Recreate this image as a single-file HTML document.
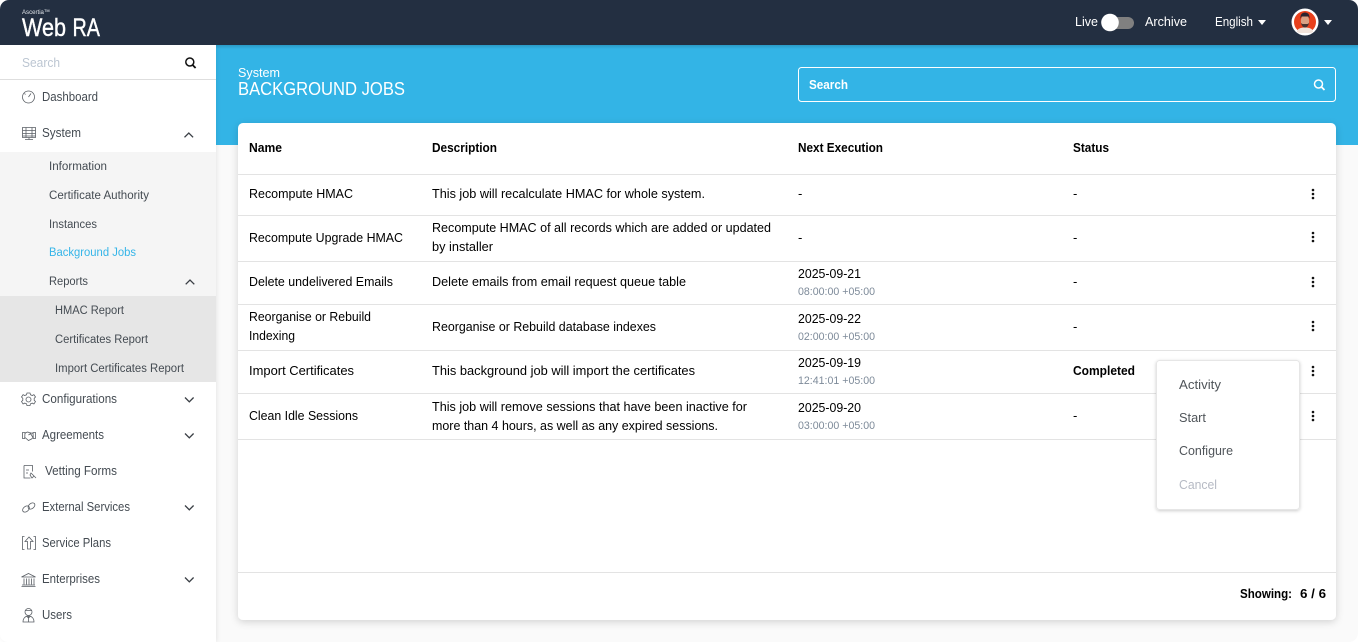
<!DOCTYPE html>
<html><head><meta charset="utf-8"><title>Background Jobs</title>
<style>
html,body{margin:0;padding:0;width:1358px;height:642px;overflow:hidden;background:#fff}
svg{display:block}
text{font-family:"Liberation Sans",sans-serif;font-size:13px;fill:#000;white-space:pre}
.s text{font-size:12.5px;fill:#444b52}
.m text{fill:#50555a;font-size:13px}
.b{font-weight:bold;font-size:12.500px}
.t{font-size:11px;fill:#7d8a99}
.i *{fill:none;stroke:#5a5f65;stroke-width:.8}
.c{fill:none;stroke:#3a3f45;stroke-width:1.3}
</style></head><body>
<svg width="1358" height="642" viewBox="0 0 1358 642" xmlns="http://www.w3.org/2000/svg">
<defs>
<linearGradient id="hs" x1="0" y1="0" x2="0" y2="1"><stop offset="0" stop-color="#2a9ac6"/><stop offset="1" stop-color="#33b4e6"/></linearGradient>
<filter id="sh" x="-3%" y="-3%" width="106%" height="108%"><feDropShadow dx="0" dy="2" stdDeviation="4" flood-color="#000" flood-opacity=".16"/></filter>
<filter id="sh2" x="-10%" y="-10%" width="120%" height="120%"><feDropShadow dx="0" dy="1" stdDeviation="1.500" flood-color="#000" flood-opacity=".2"/></filter>
<filter id="sh3" x="-5%" y="0" width="110%" height="100%"><feDropShadow dx="1" dy="0" stdDeviation="2" flood-color="#000" flood-opacity=".08"/></filter>
</defs>
<rect width="1358" height="642" fill="#fff"/>
<rect x="0" y="0" width="1358" height="642" rx="9" fill="#fafafa"/>
<rect x="216" y="45" width="1142" height="100" fill="#33b4e6"/>
<rect x="216" y="45" width="1142" height="4" fill="url(#hs)"/>

<!-- sidebar -->
<path d="M0 45H216V642H8a8 8 0 0 1-8-8Z" fill="#fff" filter="url(#sh3)"/>
<rect x="0" y="152" width="216" height="144" fill="#f5f5f5"/>
<rect x="0" y="296" width="216" height="86" fill="#e6e6e6"/>
<rect x="0" y="79" width="216" height="1" fill="#dedede"/>

<!-- header -->
<path d="M9 0H1349a9 9 0 0 1 9 9V45H0V9a9 9 0 0 1 9-9Z" fill="#232f41"/>
<text x="22" y="14" style="font-size:6.500px;fill:#dfe3e8" textLength="28" lengthAdjust="spacingAndGlyphs">Ascertia™</text>
<text x="22" y="36" style="font-size:25px;fill:#fff;stroke:#fff;stroke-width:.4" textLength="44" lengthAdjust="spacingAndGlyphs">Web</text>
<text x="72.500" y="36" style="font-size:25px;fill:#fff;stroke:#fff;stroke-width:.4" textLength="27.500" lengthAdjust="spacingAndGlyphs">RA</text>
<text x="1075" y="26" style="fill:#fff" textLength="23" lengthAdjust="spacingAndGlyphs">Live</text>
<rect x="1110" y="17" width="24" height="12" rx="6" fill="#808080"/>
<circle cx="1110" cy="22.500" r="8.800" fill="#fff"/>
<text x="1145" y="26" style="fill:#fff" textLength="42" lengthAdjust="spacingAndGlyphs">Archive</text>
<text x="1215" y="26" style="fill:#fff" textLength="38" lengthAdjust="spacingAndGlyphs">English</text>
<path d="M1258 20h8l-4 5Z" fill="#fff"/>
<circle cx="1305" cy="22" r="13.500" fill="#fff"/>
<circle cx="1305" cy="22" r="11" fill="#e8401c"/>
<path d="M1297 32c0-3.500 4-4.500 8-4.500s8 1 8 4.500c-2 1.500-5 1-8 1s-6 .5-8-1Z" fill="#f1e3da"/>
<ellipse cx="1305" cy="21" rx="4.200" ry="6" fill="#d9a184"/>
<path d="M1300.500 19c-.5-5 2-6.500 4.500-6.500s5 1.500 4.500 6.500l-1-2.500h-7Z" fill="#2c2430"/>
<path d="M1301 23c1 4 2.500 4.500 4 4.500s3-.5 4-4.500l-1.500 1h-5Z" fill="#4a3330"/>
<path d="M1324 20h8l-4 5Z" fill="#fff"/>

<!-- sidebar search -->
<text x="22" y="67" style="font-size:13px;fill:#bcc6d2" textLength="38" lengthAdjust="spacingAndGlyphs">Search</text>
<circle cx="189.800" cy="62" r="4" fill="none" stroke="#111" stroke-width="1.500"/>
<path d="M192.600 65l3 3" stroke="#111" stroke-width="1.800" fill="none"/>

<!-- sidebar icons -->
<g class="i">
<circle cx="28.500" cy="97" r="6"/><path d="M28.500 97l2.500-3.500M24.500 93.500l1 1"/>
<path d="M22.500 127.500h13v10h-13ZM22.500 130.500h13M22.500 133.500h13M22.500 136h13M26 127.500v10M32 127.500v10M25 139.500h8M29 137.500v2"/>
<circle cx="28.500" cy="399.500" r="2.500"/>
<path d="M27 393l3 0 .5 1.800 1.800.7 1.600-.9 1.600 2.400-1.300 1.300v2l1.300 1.300-1.600 2.400-1.600-.9-1.800.7-.5 1.800h-3l-.5-1.800-1.800-.7-1.600.9-1.600-2.400 1.300-1.300v-2l-1.300-1.300 1.600-2.400 1.600.9 1.800-.7Z"/>
<path d="M22.500 432.500h2.500l-.3 6h-2.200ZM35.500 432.500h-2.500l.3 6h2.200ZM25 433.500c2-2 3-1.500 4-1l4.500 1M25 437.500l3.500 3 3-1.500 1.500-1.500M28.500 435l2-1.500 2.500 4"/>
<path d="M24 465.500h8.500v6M24 465.500v12.500h6.500M26 470h3M26 473h2M31 473l3 3-2 2-2-3ZM34 476l2 2" stroke="#9a9fa5"/>
<ellipse cx="26" cy="509" rx="3.800" ry="2.600" transform="rotate(-40 26 509)"/>
<ellipse cx="31.500" cy="506" rx="3.800" ry="2.600" transform="rotate(-40 31.500 506)"/>
<path d="M24.500 536.500h-2v13h2M33.500 536.500h2v13h-2M29 537l-4 4.500h2.500v7.500h3v-7.500h2.500Z"/>
<path d="M28.500 573.500l7 3.500h-14ZM24 578.500v6M26.500 578.500v6M29 578.500v6M31.500 578.500v6M34 578.500v6M22 585h13M21.500 586.500h14"/>
<circle cx="28.500" cy="612" r="3.500"/>
<path d="M25 610.500h7M23 622c0-4 2.500-6 5.500-6s5.500 2 5.500 6ZM28.500 616v6M26.500 616l2 2 2-2" />
</g>

<!-- sidebar text -->
<g class="s">
<text x="42" y="101" textLength="56" lengthAdjust="spacingAndGlyphs">Dashboard</text>
<text x="42" y="137" textLength="39" lengthAdjust="spacingAndGlyphs">System</text>
<text x="49" y="170" style="font-size:11.500px" textLength="58" lengthAdjust="spacingAndGlyphs">Information</text>
<text x="49" y="199" style="font-size:11.500px" textLength="100" lengthAdjust="spacingAndGlyphs">Certificate Authority</text>
<text x="49" y="228" style="font-size:11.500px" textLength="48" lengthAdjust="spacingAndGlyphs">Instances</text>
<text x="49" y="256" style="font-size:11.500px;fill:#35b5e8" textLength="87" lengthAdjust="spacingAndGlyphs">Background Jobs</text>
<text x="49" y="285" style="font-size:11.500px" textLength="39" lengthAdjust="spacingAndGlyphs">Reports</text>
<text x="55" y="314" style="font-size:11.500px" textLength="69" lengthAdjust="spacingAndGlyphs">HMAC Report</text>
<text x="55" y="343" style="font-size:11.500px" textLength="93" lengthAdjust="spacingAndGlyphs">Certificates Report</text>
<text x="55" y="372" style="font-size:11.500px" textLength="129" lengthAdjust="spacingAndGlyphs">Import Certificates Report</text>
<text x="42" y="403" textLength="75" lengthAdjust="spacingAndGlyphs">Configurations</text>
<text x="42" y="439" textLength="62" lengthAdjust="spacingAndGlyphs">Agreements</text>
<text x="45" y="475" textLength="72" lengthAdjust="spacingAndGlyphs">Vetting Forms</text>
<text x="42" y="511" textLength="88" lengthAdjust="spacingAndGlyphs">External Services</text>
<text x="42" y="547" textLength="69" lengthAdjust="spacingAndGlyphs">Service Plans</text>
<text x="42" y="583" textLength="58" lengthAdjust="spacingAndGlyphs">Enterprises</text>
<text x="42" y="619" textLength="30" lengthAdjust="spacingAndGlyphs">Users</text>
</g>
<path class="c" d="M184.500 137.300l4.300-4.300 4.300 4.300M185.700 284.300l4.300-4.300 4.300 4.300M185 397.500l4.300 4.300 4.300-4.300M185 433.500l4.300 4.300 4.300-4.300M185 505.500l4.300 4.300 4.300-4.300M185 577.500l4.300 4.300 4.300-4.300"/>

<!-- title -->
<text x="238" y="77" style="fill:#fff" textLength="42" lengthAdjust="spacingAndGlyphs">System</text>
<text x="238" y="95" style="font-size:18px;fill:#fff" textLength="167" lengthAdjust="spacingAndGlyphs">BACKGROUND JOBS</text>
<rect x="798.500" y="67.500" width="537" height="34" rx="3" fill="none" stroke="#fff"/>
<text x="809" y="89" class="b" style="fill:#fff" textLength="39" lengthAdjust="spacingAndGlyphs">Search</text>
<circle cx="1318.500" cy="84" r="4" fill="none" stroke="#fff" stroke-width="1.500"/>
<path d="M1321.500 87l3 3" stroke="#fff" stroke-width="1.800"/>

<!-- card -->
<rect x="238" y="123" width="1098" height="497" rx="5" fill="#fff" filter="url(#sh)"/>
<g fill="#e3e3e3">
<rect x="238" y="174" width="1098" height="1"/><rect x="238" y="215" width="1098" height="1"/>
<rect x="238" y="261" width="1098" height="1"/><rect x="238" y="304" width="1098" height="1"/>
<rect x="238" y="350" width="1098" height="1"/><rect x="238" y="393" width="1098" height="1"/>
<rect x="238" y="439" width="1098" height="1"/><rect x="238" y="572" width="1098" height="1"/>
</g>
<text class="b" x="249" y="152" textLength="33" lengthAdjust="spacingAndGlyphs">Name</text>
<text class="b" x="432" y="152" textLength="65" lengthAdjust="spacingAndGlyphs">Description</text>
<text class="b" x="798" y="152" textLength="85" lengthAdjust="spacingAndGlyphs">Next Execution</text>
<text class="b" x="1073" y="152" textLength="36" lengthAdjust="spacingAndGlyphs">Status</text>

<text x="249" y="198" textLength="104" lengthAdjust="spacingAndGlyphs">Recompute HMAC</text>
<text x="432" y="198" textLength="273" lengthAdjust="spacingAndGlyphs">This job will recalculate HMAC for whole system.</text>
<text x="798" y="198">-</text><text x="1073" y="198">-</text>

<text x="249" y="242" textLength="154" lengthAdjust="spacingAndGlyphs">Recompute Upgrade HMAC</text>
<text x="432" y="232" textLength="339" lengthAdjust="spacingAndGlyphs">Recompute HMAC of all records which are added or updated</text>
<text x="432" y="251" textLength="61" lengthAdjust="spacingAndGlyphs">by installer</text>
<text x="798" y="242">-</text><text x="1073" y="242">-</text>

<text x="249" y="286" textLength="144" lengthAdjust="spacingAndGlyphs">Delete undelivered Emails</text>
<text x="432" y="286" textLength="254" lengthAdjust="spacingAndGlyphs">Delete emails from email request queue table</text>
<text x="798" y="278" textLength="63" lengthAdjust="spacingAndGlyphs">2025-09-21</text>
<text class="t" x="798" y="295" textLength="77" lengthAdjust="spacingAndGlyphs">08:00:00 +05:00</text>
<text x="1073" y="286">-</text>

<text x="249" y="321" textLength="122" lengthAdjust="spacingAndGlyphs">Reorganise or Rebuild</text>
<text x="249" y="340" textLength="46" lengthAdjust="spacingAndGlyphs">Indexing</text>
<text x="432" y="331" textLength="224" lengthAdjust="spacingAndGlyphs">Reorganise or Rebuild database indexes</text>
<text x="798" y="323" textLength="63" lengthAdjust="spacingAndGlyphs">2025-09-22</text>
<text class="t" x="798" y="340" textLength="77" lengthAdjust="spacingAndGlyphs">02:00:00 +05:00</text>
<text x="1073" y="331">-</text>

<text x="249" y="375" textLength="105" lengthAdjust="spacingAndGlyphs">Import Certificates</text>
<text x="432" y="375" textLength="263" lengthAdjust="spacingAndGlyphs">This background job will import the certificates</text>
<text x="798" y="367" textLength="63" lengthAdjust="spacingAndGlyphs">2025-09-19</text>
<text class="t" x="798" y="384" textLength="77" lengthAdjust="spacingAndGlyphs">12:41:01 +05:00</text>
<text class="b" x="1073" y="375" textLength="62" lengthAdjust="spacingAndGlyphs">Completed</text>

<text x="249" y="420" textLength="109" lengthAdjust="spacingAndGlyphs">Clean Idle Sessions</text>
<text x="432" y="411" textLength="315" lengthAdjust="spacingAndGlyphs">This job will remove sessions that have been inactive for</text>
<text x="432" y="430" textLength="286" lengthAdjust="spacingAndGlyphs">more than 4 hours, as well as any expired sessions.</text>
<text x="798" y="412" textLength="63" lengthAdjust="spacingAndGlyphs">2025-09-20</text>
<text class="t" x="798" y="429" textLength="77" lengthAdjust="spacingAndGlyphs">03:00:00 +05:00</text>
<text x="1073" y="420">-</text>

<g fill="#111">
<circle cx="1313" cy="190" r="1.300"/><circle cx="1313" cy="194" r="1.300"/><circle cx="1313" cy="198" r="1.300"/>
<circle cx="1313" cy="233" r="1.300"/><circle cx="1313" cy="237" r="1.300"/><circle cx="1313" cy="241" r="1.300"/>
<circle cx="1313" cy="278" r="1.300"/><circle cx="1313" cy="282" r="1.300"/><circle cx="1313" cy="286" r="1.300"/>
<circle cx="1313" cy="322" r="1.300"/><circle cx="1313" cy="326" r="1.300"/><circle cx="1313" cy="330" r="1.300"/>
<circle cx="1313" cy="367" r="1.300"/><circle cx="1313" cy="371" r="1.300"/><circle cx="1313" cy="375" r="1.300"/>
<circle cx="1313" cy="412" r="1.300"/><circle cx="1313" cy="416" r="1.300"/><circle cx="1313" cy="420" r="1.300"/>
</g>

<text class="b" x="1240" y="598" textLength="52" lengthAdjust="spacingAndGlyphs">Showing:</text>
<text class="b" x="1300" y="598" textLength="26" lengthAdjust="spacingAndGlyphs">6 / 6</text>

<!-- dropdown -->
<rect x="1156.500" y="360.500" width="143" height="149" rx="3" fill="#fff" stroke="#e6e6e6" filter="url(#sh2)"/>
<g class="m">
<text x="1179" y="389" textLength="42" lengthAdjust="spacingAndGlyphs">Activity</text>
<text x="1179" y="422" textLength="27" lengthAdjust="spacingAndGlyphs">Start</text>
<text x="1179" y="455" textLength="54" lengthAdjust="spacingAndGlyphs">Configure</text>
<text x="1179" y="489" style="fill:#b6bac4" textLength="38" lengthAdjust="spacingAndGlyphs">Cancel</text>
</g>
</svg>
</body></html>
